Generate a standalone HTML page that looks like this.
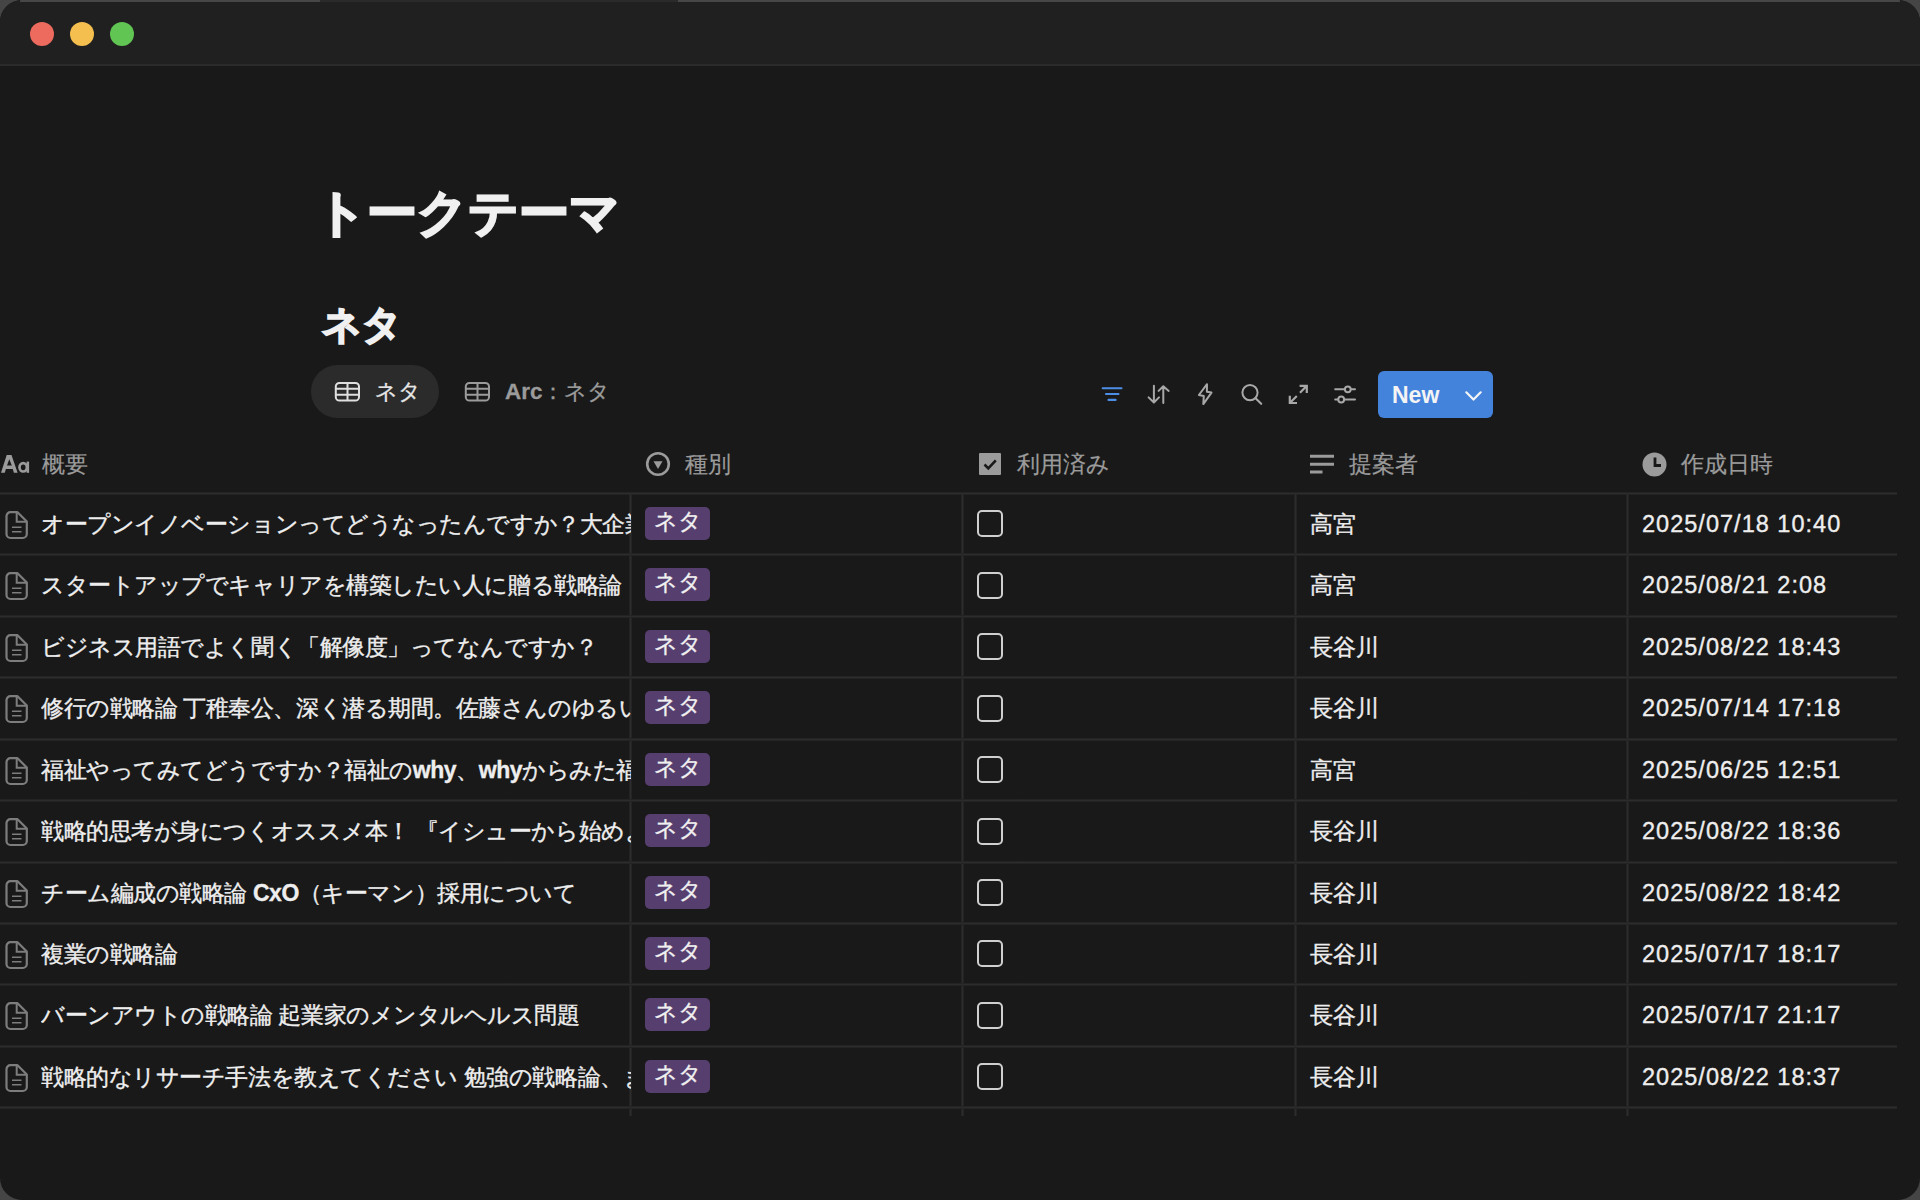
<!DOCTYPE html>
<html lang="ja">
<head>
<meta charset="utf-8">
<title>トークテーマ</title>
<style>
html,body{margin:0;padding:0;width:1920px;height:1200px;overflow:hidden;background:#454545;}
body{font-family:"Liberation Sans",sans-serif;position:relative;}
.win{position:absolute;left:0;top:0;width:1920px;height:1200px;background:#191919;border-radius:22px;overflow:hidden;}
.tb{position:absolute;left:0;top:0;width:1920px;height:64px;background:#202020;border-bottom:2px solid #2b2b2b;}
.edge{position:absolute;top:0;height:2px;}
.dot{position:absolute;top:22px;width:24px;height:24px;border-radius:50%;}
.abs{position:absolute;white-space:nowrap;}
.title{left:316px;top:183px;font-size:50px;color:#f0f0f0;font-weight:bold;line-height:60px;-webkit-text-stroke:2.2px #f0f0f0;}
.dbt{left:322px;top:300px;font-size:39px;color:#f0f0f0;font-weight:bold;line-height:50px;-webkit-text-stroke:1.8px #f0f0f0;}
.pill{position:absolute;left:311px;top:365px;width:128px;height:53px;border-radius:27px;background:#2b2b2b;}
.tabt{position:absolute;top:376px;font-size:22.4px;line-height:32px;white-space:nowrap;-webkit-text-stroke:0.3px currentColor;}
.ico{position:absolute;}
.new{position:absolute;left:1378px;top:371px;width:115px;height:47px;border-radius:6px;background:#4483dc;}
.newt{position:absolute;left:14px;top:9px;font-size:23px;line-height:30px;color:#f4f4f4;font-weight:bold;}
.hline{position:absolute;left:0;width:1897px;height:3px;background:linear-gradient(#1f1f1f,#2c2c2c,#1f1f1f);}
.vline{position:absolute;top:494px;width:3px;height:622px;background:linear-gradient(90deg,#1f1f1f,#2c2c2c,#1f1f1f);}
.hd{position:absolute;top:448px;font-size:23px;line-height:32px;color:#9b9b9b;white-space:nowrap;-webkit-text-stroke:0.2px #9b9b9b;}
.cell{position:absolute;font-size:23px;line-height:32px;color:#eeeeee;white-space:nowrap;-webkit-text-stroke:0.35px #eeeeee;}
.ttl{left:41px;width:590px;overflow:hidden;letter-spacing:-0.45px;}
.tag{position:absolute;left:645px;width:65px;height:33px;border-radius:5px;background:#563e6f;color:#f0f0f0;font-size:23px;line-height:29px;text-align:center;-webkit-text-stroke:0.3px #f0f0f0;}
.cb{position:absolute;left:977px;width:22px;height:23px;border:2px solid #cfcfcf;border-radius:5px;}
.pg{position:absolute;left:5px;}
.date{left:1642px;font-size:23.5px;letter-spacing:1.02px;}
</style>
</head>
<body>
<div class="win">
<div class="tb"></div>
<div class="edge" style="left:20px;width:300px;background:#474747"></div>
<div class="edge" style="left:320px;width:358px;background:#2a2a2a"></div>
<div class="edge" style="left:678px;width:1222px;background:#474747"></div>
<div class="dot" style="left:30px;background:#ec6a5e"></div>
<div class="dot" style="left:70px;background:#f4bf4f"></div>
<div class="dot" style="left:110px;background:#61c554"></div>

<div class="abs title">トークテーマ</div>
<div class="abs dbt">ネタ</div>

<div class="pill"></div>
<svg class="ico" style="left:334px;top:380px" width="27" height="24" viewBox="0 0 27 24"><rect x="1.8" y="2.9" width="23.2" height="17.7" rx="3.6" fill="none" stroke="#e0e0e0" stroke-width="2"/><path d="M2 8.7h23M2 14.7h23M13.5 3v17.5" stroke="#e0e0e0" stroke-width="2"/></svg>
<div class="tabt" style="left:375px;color:#e6e6e6">ネタ</div>
<svg class="ico" style="left:464px;top:380px" width="27" height="24" viewBox="0 0 27 24"><rect x="1.8" y="2.9" width="23.2" height="17.7" rx="3.6" fill="none" stroke="#9b9b9b" stroke-width="2"/><path d="M2 8.7h23M2 14.7h23M13.5 3v17.5" stroke="#9b9b9b" stroke-width="2"/></svg>
<div class="tabt" style="left:505px;color:#9b9b9b"><b>Arc</b>：ネタ</div>

<svg class="ico" style="left:1098px;top:380px" width="28" height="26" viewBox="0 0 28 26">
 <path d="M4.7 8.2H23.5M8 14H20.5M10.5 19.9H17.6" stroke="#4c8ee6" stroke-width="2.1" stroke-linecap="round"/></svg>
<svg class="ico" style="left:1144px;top:380px" width="30" height="28" viewBox="0 0 30 28">
 <path d="M9.9 5.8V22.3M4.6 17.4l5.3 5.1 5.1-5.1M19.3 23V6.5M14.6 10.9l4.7-4.7 5.4 4.7" fill="none" stroke="#a8a8a8" stroke-width="2" stroke-linecap="round" stroke-linejoin="round"/></svg>
<svg class="ico" style="left:1193px;top:380px" width="24" height="28" viewBox="0 0 24 28">
 <path d="M14 4.2L5.9 15l4.9 1.1-0.5 8L18.5 12.6 13.9 11.7z" fill="none" stroke="#a8a8a8" stroke-width="2" stroke-linejoin="round"/></svg>
<svg class="ico" style="left:1236px;top:378px" width="30" height="30" viewBox="0 0 30 30">
 <circle cx="14" cy="14.6" r="7.6" fill="none" stroke="#a8a8a8" stroke-width="2"/><path d="M19.6 20.2l5.6 5.6" stroke="#a8a8a8" stroke-width="2.1" stroke-linecap="round"/></svg>
<svg class="ico" style="left:1284px;top:380px" width="30" height="28" viewBox="0 0 30 28">
 <path d="M6.3 22.5L12.8 16M16 12.8L22.3 6.3M15.6 5.8h7.2v7.2M5.8 15.8v7.2h7.2" fill="none" stroke="#a8a8a8" stroke-width="2.2" stroke-linecap="butt" stroke-linejoin="miter"/></svg>
<svg class="ico" style="left:1330px;top:380px" width="30" height="28" viewBox="0 0 30 28">
 <path d="M5.2 9.3H25M5.2 19.5H25" stroke="#a8a8a8" stroke-width="2" stroke-linecap="round"/>
 <circle cx="17.8" cy="9.3" r="2.9" fill="#191919" stroke="#a8a8a8" stroke-width="2"/>
 <circle cx="11.2" cy="19.5" r="2.9" fill="#191919" stroke="#a8a8a8" stroke-width="2"/></svg>
<div class="new"><div class="newt">New</div>
 <svg class="ico" style="left:86px;top:19px" width="20" height="13" viewBox="0 0 20 13"><path d="M2.3 2.3l7.2 7.3 7.2-7.3" fill="none" stroke="#f4f4f4" stroke-width="2.2" stroke-linecap="round" stroke-linejoin="round"/></svg></div>


<svg class="ico" style="left:0;top:448px" width="32" height="32" viewBox="0 0 32 32">
 <path fill-rule="evenodd" fill="#9b9b9b" d="M1 24.8L6.7 6.9h4.8L17.6 24.8h-3.7l-1.1-3.8H5.9l-1.1 3.8zM7 17.6h4.8L9.3 11.2z"/>
 <ellipse cx="23.2" cy="19.3" rx="3.7" ry="4.2" fill="none" stroke="#9b9b9b" stroke-width="2.7"/>
 <rect x="26.6" y="13.6" width="2.5" height="11.2" fill="#9b9b9b"/></svg>
<div class="hd" style="left:42px">概要</div>
<svg class="ico" style="left:645px;top:451px" width="26" height="26" viewBox="0 0 26 26">
 <circle cx="13" cy="13" r="10.8" fill="none" stroke="#9b9b9b" stroke-width="2.6"/><path d="M8.5 10.2h9l-4.5 7.8z" fill="#9b9b9b"/></svg>
<div class="hd" style="left:685px">種別</div>
<svg class="ico" style="left:979px;top:453px" width="22" height="22" viewBox="0 0 22 22">
 <rect x="0" y="0" width="22" height="22" rx="1" fill="#9b9b9b"/><path d="M5.5 11.5l3.8 3.8 7.5-8" fill="none" stroke="#191919" stroke-width="2.6"/></svg>
<div class="hd" style="left:1017px">利用済み</div>
<svg class="ico" style="left:1309px;top:452px" width="27" height="24" viewBox="0 0 27 24">
 <path d="M1 4.2h24M1 12.2h24M1 20.1h12.5" stroke="#9b9b9b" stroke-width="3"/></svg>
<div class="hd" style="left:1349px">提案者</div>
<svg class="ico" style="left:1642px;top:452px" width="25" height="25" viewBox="0 0 25 25">
 <circle cx="12.5" cy="12.5" r="12" fill="#9b9b9b"/><path d="M13 5.5v8h6" fill="none" stroke="#191919" stroke-width="2.8"/></svg>
<div class="hd" style="left:1681px">作成日時</div>
<div class="hline" style="top:492px"></div>
<div class="vline" style="left:629px"></div>
<div class="vline" style="left:961px"></div>
<div class="vline" style="left:1294px"></div>
<div class="vline" style="left:1626px"></div>

<div class="cell ttl" style="top:507.5px">オープンイノベーションってどうなったんですか？大企業の新規事業</div>
<svg class="pg" style="top:509.5px" width="24" height="30" viewBox="0 0 24 30"><path d="M5.5 2.2h7L21.8 11.5V24a4 4 0 0 1-4 4h-12.3a4 4 0 0 1-4-4V6.2a4 4 0 0 1 4-4z" fill="none" stroke="#7d7d7d" stroke-width="2.2" stroke-linejoin="round"/><path d="M11.7 2.5V11.8h9.8" fill="none" stroke="#7d7d7d" stroke-width="2"/><path d="M7 17.3h9.5M7 21.7h9.5" stroke="#7d7d7d" stroke-width="1.5"/></svg>
<div class="tag" style="top:506.5px">ネタ</div>
<div class="cb" style="top:510.0px"></div>
<div class="cell" style="left:1310px;top:507.5px">高宮</div>
<div class="cell date" style="top:507.5px">2025/07/18 10:40</div>
<div class="hline" style="top:553px"></div>
<div class="cell ttl" style="top:569.0px">スタートアップでキャリアを構築したい人に贈る戦略論</div>
<svg class="pg" style="top:571.0px" width="24" height="30" viewBox="0 0 24 30"><path d="M5.5 2.2h7L21.8 11.5V24a4 4 0 0 1-4 4h-12.3a4 4 0 0 1-4-4V6.2a4 4 0 0 1 4-4z" fill="none" stroke="#7d7d7d" stroke-width="2.2" stroke-linejoin="round"/><path d="M11.7 2.5V11.8h9.8" fill="none" stroke="#7d7d7d" stroke-width="2"/><path d="M7 17.3h9.5M7 21.7h9.5" stroke="#7d7d7d" stroke-width="1.5"/></svg>
<div class="tag" style="top:568.0px">ネタ</div>
<div class="cb" style="top:571.5px"></div>
<div class="cell" style="left:1310px;top:569.0px">高宮</div>
<div class="cell date" style="top:569.0px">2025/08/21 2:08</div>
<div class="hline" style="top:615px"></div>
<div class="cell ttl" style="top:630.5px">ビジネス用語でよく聞く「解像度」ってなんですか？</div>
<svg class="pg" style="top:632.5px" width="24" height="30" viewBox="0 0 24 30"><path d="M5.5 2.2h7L21.8 11.5V24a4 4 0 0 1-4 4h-12.3a4 4 0 0 1-4-4V6.2a4 4 0 0 1 4-4z" fill="none" stroke="#7d7d7d" stroke-width="2.2" stroke-linejoin="round"/><path d="M11.7 2.5V11.8h9.8" fill="none" stroke="#7d7d7d" stroke-width="2"/><path d="M7 17.3h9.5M7 21.7h9.5" stroke="#7d7d7d" stroke-width="1.5"/></svg>
<div class="tag" style="top:629.5px">ネタ</div>
<div class="cb" style="top:633.0px"></div>
<div class="cell" style="left:1310px;top:630.5px">長谷川</div>
<div class="cell date" style="top:630.5px">2025/08/22 18:43</div>
<div class="hline" style="top:676px"></div>
<div class="cell ttl" style="top:692.0px">修行の戦略論 丁稚奉公、深く潜る期間。佐藤さんのゆるい話</div>
<svg class="pg" style="top:694.0px" width="24" height="30" viewBox="0 0 24 30"><path d="M5.5 2.2h7L21.8 11.5V24a4 4 0 0 1-4 4h-12.3a4 4 0 0 1-4-4V6.2a4 4 0 0 1 4-4z" fill="none" stroke="#7d7d7d" stroke-width="2.2" stroke-linejoin="round"/><path d="M11.7 2.5V11.8h9.8" fill="none" stroke="#7d7d7d" stroke-width="2"/><path d="M7 17.3h9.5M7 21.7h9.5" stroke="#7d7d7d" stroke-width="1.5"/></svg>
<div class="tag" style="top:691.0px">ネタ</div>
<div class="cb" style="top:694.5px"></div>
<div class="cell" style="left:1310px;top:692.0px">長谷川</div>
<div class="cell date" style="top:692.0px">2025/07/14 17:18</div>
<div class="hline" style="top:738px"></div>
<div class="cell ttl" style="top:753.5px">福祉やってみてどうですか？福祉の<b>why</b>、<b>why</b>からみた福祉</div>
<svg class="pg" style="top:755.5px" width="24" height="30" viewBox="0 0 24 30"><path d="M5.5 2.2h7L21.8 11.5V24a4 4 0 0 1-4 4h-12.3a4 4 0 0 1-4-4V6.2a4 4 0 0 1 4-4z" fill="none" stroke="#7d7d7d" stroke-width="2.2" stroke-linejoin="round"/><path d="M11.7 2.5V11.8h9.8" fill="none" stroke="#7d7d7d" stroke-width="2"/><path d="M7 17.3h9.5M7 21.7h9.5" stroke="#7d7d7d" stroke-width="1.5"/></svg>
<div class="tag" style="top:752.5px">ネタ</div>
<div class="cb" style="top:756.0px"></div>
<div class="cell" style="left:1310px;top:753.5px">高宮</div>
<div class="cell date" style="top:753.5px">2025/06/25 12:51</div>
<div class="hline" style="top:799px"></div>
<div class="cell ttl" style="top:815.0px">戦略的思考が身につくオススメ本！ 『イシューから始めよ』</div>
<svg class="pg" style="top:817.0px" width="24" height="30" viewBox="0 0 24 30"><path d="M5.5 2.2h7L21.8 11.5V24a4 4 0 0 1-4 4h-12.3a4 4 0 0 1-4-4V6.2a4 4 0 0 1 4-4z" fill="none" stroke="#7d7d7d" stroke-width="2.2" stroke-linejoin="round"/><path d="M11.7 2.5V11.8h9.8" fill="none" stroke="#7d7d7d" stroke-width="2"/><path d="M7 17.3h9.5M7 21.7h9.5" stroke="#7d7d7d" stroke-width="1.5"/></svg>
<div class="tag" style="top:814.0px">ネタ</div>
<div class="cb" style="top:817.5px"></div>
<div class="cell" style="left:1310px;top:815.0px">長谷川</div>
<div class="cell date" style="top:815.0px">2025/08/22 18:36</div>
<div class="hline" style="top:861px"></div>
<div class="cell ttl" style="top:876.5px">チーム編成の戦略論 <b>CxO</b>（キーマン）採用について</div>
<svg class="pg" style="top:878.5px" width="24" height="30" viewBox="0 0 24 30"><path d="M5.5 2.2h7L21.8 11.5V24a4 4 0 0 1-4 4h-12.3a4 4 0 0 1-4-4V6.2a4 4 0 0 1 4-4z" fill="none" stroke="#7d7d7d" stroke-width="2.2" stroke-linejoin="round"/><path d="M11.7 2.5V11.8h9.8" fill="none" stroke="#7d7d7d" stroke-width="2"/><path d="M7 17.3h9.5M7 21.7h9.5" stroke="#7d7d7d" stroke-width="1.5"/></svg>
<div class="tag" style="top:875.5px">ネタ</div>
<div class="cb" style="top:879.0px"></div>
<div class="cell" style="left:1310px;top:876.5px">長谷川</div>
<div class="cell date" style="top:876.5px">2025/08/22 18:42</div>
<div class="hline" style="top:922px"></div>
<div class="cell ttl" style="top:937.5px">複業の戦略論</div>
<svg class="pg" style="top:939.5px" width="24" height="30" viewBox="0 0 24 30"><path d="M5.5 2.2h7L21.8 11.5V24a4 4 0 0 1-4 4h-12.3a4 4 0 0 1-4-4V6.2a4 4 0 0 1 4-4z" fill="none" stroke="#7d7d7d" stroke-width="2.2" stroke-linejoin="round"/><path d="M11.7 2.5V11.8h9.8" fill="none" stroke="#7d7d7d" stroke-width="2"/><path d="M7 17.3h9.5M7 21.7h9.5" stroke="#7d7d7d" stroke-width="1.5"/></svg>
<div class="tag" style="top:936.5px">ネタ</div>
<div class="cb" style="top:940.0px"></div>
<div class="cell" style="left:1310px;top:937.5px">長谷川</div>
<div class="cell date" style="top:937.5px">2025/07/17 18:17</div>
<div class="hline" style="top:983px"></div>
<div class="cell ttl" style="top:999.0px">バーンアウトの戦略論 起業家のメンタルヘルス問題</div>
<svg class="pg" style="top:1001.0px" width="24" height="30" viewBox="0 0 24 30"><path d="M5.5 2.2h7L21.8 11.5V24a4 4 0 0 1-4 4h-12.3a4 4 0 0 1-4-4V6.2a4 4 0 0 1 4-4z" fill="none" stroke="#7d7d7d" stroke-width="2.2" stroke-linejoin="round"/><path d="M11.7 2.5V11.8h9.8" fill="none" stroke="#7d7d7d" stroke-width="2"/><path d="M7 17.3h9.5M7 21.7h9.5" stroke="#7d7d7d" stroke-width="1.5"/></svg>
<div class="tag" style="top:998.0px">ネタ</div>
<div class="cb" style="top:1001.5px"></div>
<div class="cell" style="left:1310px;top:999.0px">長谷川</div>
<div class="cell date" style="top:999.0px">2025/07/17 21:17</div>
<div class="hline" style="top:1045px"></div>
<div class="cell ttl" style="top:1060.5px">戦略的なリサーチ手法を教えてください 勉強の戦略論、まとめ</div>
<svg class="pg" style="top:1062.5px" width="24" height="30" viewBox="0 0 24 30"><path d="M5.5 2.2h7L21.8 11.5V24a4 4 0 0 1-4 4h-12.3a4 4 0 0 1-4-4V6.2a4 4 0 0 1 4-4z" fill="none" stroke="#7d7d7d" stroke-width="2.2" stroke-linejoin="round"/><path d="M11.7 2.5V11.8h9.8" fill="none" stroke="#7d7d7d" stroke-width="2"/><path d="M7 17.3h9.5M7 21.7h9.5" stroke="#7d7d7d" stroke-width="1.5"/></svg>
<div class="tag" style="top:1059.5px">ネタ</div>
<div class="cb" style="top:1063.0px"></div>
<div class="cell" style="left:1310px;top:1060.5px">長谷川</div>
<div class="cell date" style="top:1060.5px">2025/08/22 18:37</div>
<div class="hline" style="top:1106px"></div>
</div>
</body>
</html>
